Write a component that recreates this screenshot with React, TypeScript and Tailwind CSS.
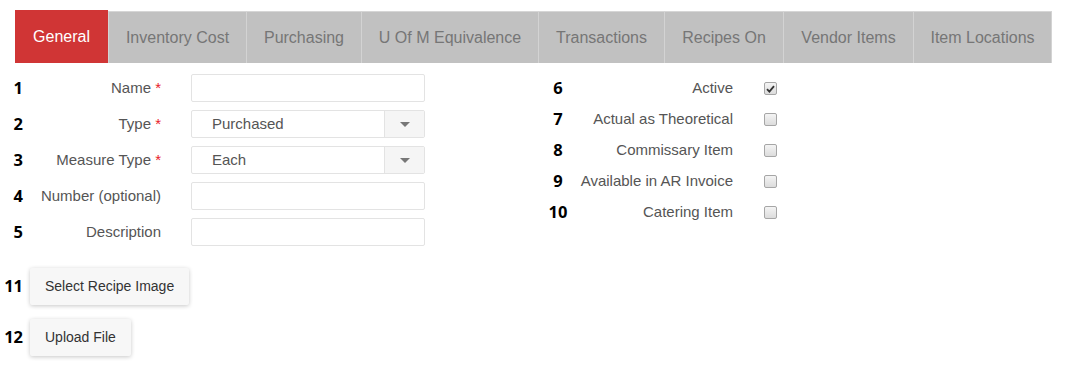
const tabs = [
  { label: 'General', w: 'w-[93px]' },
  { label: 'Inventory Cost', w: 'w-[138px]' },
  { label: 'Purchasing', w: 'w-[115px]' },
  { label: 'U Of M Equivalence', w: 'w-[177px]' },
  { label: 'Transactions', w: 'w-[126px]' },
  { label: 'Recipes On', w: 'w-[119px]' },
  { label: 'Vendor Items', w: 'w-[130px]' },
  { label: 'Item Locations', w: 'w-[139px]' },
]

const fields = [
  { n: '1', label: 'Name', req: true },
  { n: '2', label: 'Type', req: true, select: 'Purchased' },
  { n: '3', label: 'Measure Type', req: true, select: 'Each' },
  { n: '4', label: 'Number (optional)' },
  { n: '5', label: 'Description' },
]

const flags = [
  { n: '6', label: 'Active', checked: true },
  { n: '7', label: 'Actual as Theoretical' },
  { n: '8', label: 'Commissary Item' },
  { n: '9', label: 'Available in AR Invoice' },
  { n: '10', label: 'Catering Item' },
]

function Num({ n, className }: { n: string; className: string }) {
  return (
    <span className={`font-['Open_Sans',sans-serif] text-[16.5px] font-bold text-black ${className}`}>
      {n}
    </span>
  )
}

function Checkbox({ checked }: { checked?: boolean }) {
  return (
    <span className="flex h-[13px] w-[13px] items-center justify-center rounded-[2px] border border-[#a6a6a6] bg-gradient-to-b from-[#f4f4f4] to-[#dcdcdc]">
      {checked && (
        <svg width="9" height="8" viewBox="0 0 9 8">
          <path d="M1 4.2 L3.4 6.6 L8 1.2" fill="none" stroke="#333" strokeWidth="1.8" />
        </svg>
      )}
    </span>
  )
}

export default function App() {
  return (
    <div className="h-[368px] w-[1065px] bg-white font-['Liberation_Sans',Arial,sans-serif]">
      {/* Tabs */}
      <div className="ml-[15px] flex h-[52px] w-[1038px] pt-[11px] box-content">
        {tabs.map((t, i) =>
          i === 0 ? (
            <div
              key={t.label}
              className={`${t.w} -mt-px flex h-[53px] items-center justify-center bg-[#d03535] text-[16px] text-white`}
            >
              {t.label}
            </div>
          ) : (
            <div
              key={t.label}
              className={`${t.w} flex h-[52px] items-center justify-center border-t border-l border-t-[#d6d6d6] border-l-[#d3d3d3] bg-[#c1c1c1] text-[16px] text-[#767676] ${
                i === tabs.length - 1 ? 'border-r border-r-[#d3d3d3]' : ''
              }`}
            >
              {t.label}
            </div>
          )
        )}
      </div>

      <div className="flex pt-[10px]">
        {/* Left column */}
        <div className="w-[543px] pt-[1px]">
          <div className="flex flex-col gap-[8px]">
            {fields.map((f) => (
              <div key={f.n} className="flex h-[28px] items-center">
                <Num n={f.n} className="w-[23px] text-right" />
                <span className="w-[138px] text-right text-[15px] text-[#555]">
                  {f.label}
                  {f.req && <span className="text-[#e8202a]"> *</span>}
                </span>
                <div className="ml-[30px] flex h-[28px] w-[234px] rounded-[2px] border border-[#e3e3e3] bg-white">
                  {f.select && (
                    <>
                      <span className="flex flex-1 items-center pl-[20px] text-[15px] text-[#555]">
                        {f.select}
                      </span>
                      <span className="flex w-[40px] items-center justify-center border-l border-[#e3e3e3] bg-[#f5f5f5]">
                        <svg width="10" height="5" viewBox="0 0 10 5">
                          <path d="M0 0 L10 0 L5 5 Z" fill="#777" />
                        </svg>
                      </span>
                    </>
                  )}
                </div>
              </div>
            ))}
          </div>

          <div className="mt-[22px] flex flex-col gap-[14px]">
            {['Select Recipe Image', 'Upload File'].map((b, i) => (
              <div key={b} className="flex items-center">
                <Num n={String(11 + i)} className="w-[23px] text-right" />
                <button className="ml-[7px] h-[37px] rounded-[2px] bg-[#f7f7f7] px-[15px] text-[14px] text-[#333] shadow-[0_1px_4px_rgba(0,0,0,0.22)]">
                  {b}
                </button>
              </div>
            ))}
          </div>
        </div>

        {/* Right column */}
        <div>
          {flags.map((f) => (
            <div key={f.n} className="flex h-[31px] items-center">
              <Num n={f.n} className="w-[30px] text-center" />
              <span className="w-[160px] text-right text-[15px] text-[#555]">{f.label}</span>
              <span className="ml-[31px]">
                <Checkbox checked={f.checked} />
              </span>
            </div>
          ))}
        </div>
      </div>
    </div>
  )
}
